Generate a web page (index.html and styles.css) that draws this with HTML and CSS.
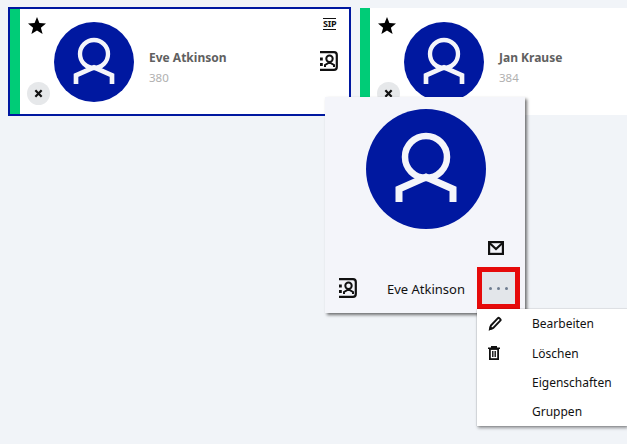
FILE: index.html
```html
<!DOCTYPE html>
<html lang="de">
<head>
    <meta charset="UTF-8">
    <title>Kontakte</title>
    <link rel="stylesheet" href="styles.css">
</head>
<body>
    <svg class="icon-defs" width="0" height="0">
        <symbol id="avatar" viewBox="0 0 120 120">
            <circle cx="60" cy="60" r="60" fill="#0018a0"/>
            <circle cx="60" cy="48" r="21" fill="none" stroke="#f4f5fa" stroke-width="6.500"/>
            <path d="M33 93V80L60 68l27 12v13" fill="none" stroke="#f4f5fa" stroke-width="7"/>
        </symbol>
        <symbol id="contact" viewBox="0 0 18 20">
            <path d="M0 1.200h14a2.800 2.800 0 0 1 2.800 2.800v12a2.800 2.800 0 0 1-2.800 2.800H0" fill="none" stroke="#111" stroke-width="2.200"/>
            <circle cx="9.500" cy="7.800" r="3.200" fill="none" stroke="#111" stroke-width="2"/>
            <path d="M5 16v-2l4.500-2.500L14 14v2" fill="none" stroke="#111" stroke-width="2"/>
            <path d="M0 6.500h2.800v3H0zM0 12h2.800v3H0z" fill="#111"/>
        </symbol>
        <symbol id="star" viewBox="0 0 18 18">
            <path d="M9 0l2.400 6.100 6.600.4-5.100 4.200 1.700 6.400L9 13.500l-5.600 3.600 1.700-6.400L0 6.500l6.600-.4z" fill="#000"/>
        </symbol>
        <symbol id="cross" viewBox="0 0 10 10">
            <path d="M1.500 1.500l7 7M8.500 1.500l-7 7" stroke="#111" stroke-width="2.400"/>
        </symbol>
    </svg>

    <div class="contact-list">
        <div class="contact-card selected">
            <div class="status-bar"></div>
            <div class="card-side">
                <svg class="star"><use href="#star"/></svg>
                <span class="remove-btn"><svg><use href="#cross"/></svg></span>
            </div>
            <svg class="card-avatar"><use href="#avatar"/></svg>
            <div class="card-info">
                <div class="card-name">Eve Atkinson</div>
                <div class="card-number">380</div>
            </div>
            <div class="card-actions">
                <span class="sip-label">SIP</span>
                <svg class="contact-icon"><use href="#contact"/></svg>
            </div>
        </div>
        <div class="contact-card plain">
            <div class="status-bar"></div>
            <div class="card-side">
                <svg class="star"><use href="#star"/></svg>
                <span class="remove-btn"><svg><use href="#cross"/></svg></span>
            </div>
            <svg class="card-avatar"><use href="#avatar"/></svg>
            <div class="card-info">
                <div class="card-name">Jan Krause</div>
                <div class="card-number">384</div>
            </div>
        </div>
    </div>

    <!-- Contact popup -->
    <div class="contact-popup">
        <svg class="popup-avatar"><use href="#avatar"/></svg>
        <div class="popup-mail">
            <svg width="16" height="14" viewBox="0 0 16 14">
                <rect x="1.100" y="1.100" width="13.800" height="11.800" fill="none" stroke="#111" stroke-width="2.200"/>
                <path d="M1.500 2l6.500 6 6.500-6" fill="none" stroke="#111" stroke-width="2.200"/>
            </svg>
        </div>
        <div class="popup-footer">
            <svg class="contact-icon"><use href="#contact"/></svg>
            <span class="popup-name">Eve Atkinson</span>
            <span class="more-btn"><i></i><i></i><i></i></span>
        </div>
    </div>

    <!-- Popup menu -->
    <ul class="popup-menu">
        <li>
            <span class="menu-icon">
                <svg width="14" height="15" viewBox="0 0 14 15">
                    <path d="M2 13l.9-3.400 7-7.400a1 1 0 0 1 1.400 0l1 1a1 1 0 0 1 0 1.400L5.300 12z" fill="none" stroke="#111" stroke-width="1.900"/>
                    <path d="M.8 14.500l1-4.500 3.400 3z" fill="#111"/>
                </svg>
            </span>
            Bearbeiten
        </li>
        <li>
            <span class="menu-icon">
                <svg width="12" height="14" viewBox="0 0 12 14">
                    <path d="M0 2.200h12M3.800 2.200V.8h4.400v1.400" fill="none" stroke="#111" stroke-width="1.600"/>
                    <rect x="1.900" y="3" width="8.200" height="10.100" fill="none" stroke="#111" stroke-width="1.800"/>
                    <path d="M4.800 5v6M7.200 5v6" stroke="#111" stroke-width="1.400"/>
                </svg>
            </span>
            Löschen
        </li>
        <li><span class="menu-icon"></span>Eigenschaften</li>
        <li><span class="menu-icon"></span>Gruppen</li>
    </ul>
</body>
</html>
```

FILE: styles.css
```css
body {
    margin: 0;
    height: 444px;
    overflow: hidden;
    position: relative;
    background-color: #f1f4f8;
    font-family: "Noto Sans", sans-serif;
    color: #111;
}
.icon-defs {
    position: absolute;
}
.contact-list {
    display: flex;
    gap: 9px;
    padding: 7px 0 0 8px;
}
.contact-card {
    flex: 0 0 343px;
    height: 109px;
    box-sizing: border-box;
    display: flex;
    background-color: white;
}
.contact-card.plain {
    flex: 1 1 0;
    min-width: 0;
    height: 107px;
    margin-top: 1px;
}
.contact-card.selected {
    border: 2px solid #0018a0;
}
.status-bar {
    flex: 0 0 10px;
    background-color: #00cc77;
}
.card-side {
    flex: 0 0 34px;
    display: flex;
    flex-direction: column;
    align-items: flex-start;
    justify-content: space-between;
    padding: 8px 0 9px;
    box-sizing: border-box;
}
.plain .card-side {
    padding-top: 9px;
    padding-bottom: 10px;
}
.star {
    width: 18px;
    height: 18px;
    margin-left: 8px;
}
.remove-btn {
    width: 23px;
    height: 23px;
    margin-left: 7px;
    border-radius: 50%;
    background-color: #e6e8ea;
    display: flex;
    align-items: center;
    justify-content: center;
}
.remove-btn svg {
    width: 9px;
    height: 9px;
}
.card-avatar {
    flex: 0 0 80px;
    width: 80px;
    height: 80px;
    margin-top: 13px;
}
.plain .card-avatar {
    margin-top: 14px;
}
.card-info {
    flex: 1;
    min-width: 0;
    padding: 41px 0 0 15px;
}
.plain .card-info {
    padding-top: 42px;
}
.card-name {
    font-size: 12px;
    line-height: 16px;
    font-weight: 700;
    color: #606060;
}
.card-number {
    margin-top: 4px;
    font-size: 11.500px;
    line-height: 16px;
    color: #b0b0b0;
}
.card-actions {
    flex: 0 0 29px;
    display: flex;
    flex-direction: column;
    align-items: flex-start;
}
.sip-label {
    margin: 9px 0 0 3px;
    padding: 0;
    font-size: 9px;
    line-height: 10px;
    font-weight: 700;
    letter-spacing: -0.2px;
    border-top: 1px solid #111;
    border-bottom: 1px solid #111;
}
.contact-icon {
    width: 18px;
    height: 20px;
    flex: none;
}
.card-actions .contact-icon {
    margin-top: 21px;
}
.contact-popup {
    position: absolute;
    left: 325px;
    top: 97px;
    width: 200px;
    height: 216px;
    background-color: #f4f5fa;
    box-shadow: 2px 2px 3px rgba(0, 0, 0, 0.55);
    display: flex;
    flex-direction: column;
}
.popup-avatar {
    flex: none;
    width: 120px;
    height: 120px;
    margin: 12px 0 0 41px;
}
.popup-mail {
    height: 14px;
    margin-top: 12px;
    padding-left: 163px;
}
.popup-mail svg {
    display: block;
}
.popup-footer {
    position: relative;
    display: flex;
    align-items: center;
    height: 42px;
    margin-top: 12px;
}
.popup-footer .contact-icon {
    margin-left: 14px;
}
.popup-name {
    margin-left: 30px;
    font-size: 13px;
    line-height: 18px;
    padding-top: 1px;
}
.more-btn {
    position: absolute;
    left: 152px;
    top: 0;
    width: 43px;
    height: 42px;
    box-sizing: border-box;
    border: 5px solid #e60a0a;
    background-color: #e3e6ea;
    display: flex;
    align-items: center;
    justify-content: center;
    gap: 5px;
}
.more-btn i {
    width: 3px;
    height: 3px;
    border-radius: 50%;
    background-color: #6f7d90;
}
.popup-menu {
    position: absolute;
    left: 477px;
    top: 309px;
    width: 150px;
    height: 117px;
    box-sizing: border-box;
    margin: 0;
    padding: 0;
    list-style: none;
    background-color: white;
    box-shadow: 0 0 1px rgba(0, 0, 0, 0.35), 1px 2px 3px rgba(0, 0, 0, 0.4);
    font-size: 12px;
    display: flex;
    flex-direction: column;
}
.popup-menu li {
    display: flex;
    align-items: center;
    height: 29px;
}
.popup-menu li:first-child {
    margin-bottom: 1px;
}
.popup-menu li:nth-child(3) {
    height: 30px;
}
.menu-icon {
    flex: 0 0 55px;
    padding-left: 11px;
    box-sizing: border-box;
    display: flex;
    align-items: center;
}
```
